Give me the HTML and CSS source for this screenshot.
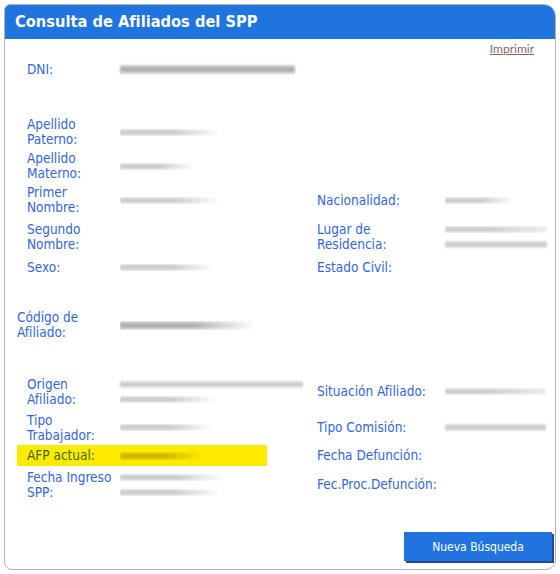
FILE: index.html
```html
<!DOCTYPE html>
<html lang="es">
<head>
    <meta charset="UTF-8">
    <title>Consulta de Afiliados del SPP</title>
    <link rel="stylesheet" href="styles.css">
</head>
<body>
    <div class="panel">
        <div class="panel-head">Consulta de Afiliados del SPP</div>

        <div class="panel-body">
            <div class="print-line"><a href="#">Imprimir</a></div>

            <div class="row r-dni">
                <span class="lbl">DNI:</span>
                <span class="val"><i class="blur dark" style="width:175px"></i></span>
            </div>

            <div class="row r-34 first">
                <span class="lbl">Apellido<br>Paterno:</span>
                <span class="val"><i class="blur fade" style="width:100px"></i></span>
            </div>
            <div class="row r-34">
                <span class="lbl">Apellido<br>Materno:</span>
                <span class="val"><i class="blur fade" style="width:74px"></i></span>
            </div>
            <div class="row r-34">
                <span class="lbl">Primer<br>Nombre:</span>
                <span class="val"><i class="blur fade" style="width:100px"></i></span>
                <span class="lbl side">Nacionalidad:</span>
                <span class="val"><i class="blur fade" style="width:68px"></i></span>
            </div>
            <div class="row r-40">
                <span class="lbl">Segundo<br>Nombre:</span>
                <span class="val"></span>
                <span class="lbl side">Lugar de<br>Residencia:</span>
                <span class="val stack">
                    <i class="blur fade-l" style="width:102px"></i>
                    <i class="blur" style="width:102px"></i>
                </span>
            </div>
            <div class="row r-20">
                <span class="lbl">Sexo:</span>
                <span class="val"><i class="blur fade" style="width:95px"></i></span>
                <span class="lbl side">Estado Civil:</span>
                <span class="val"></span>
            </div>

            <div class="row r-34 gap">
                <span class="lbl flush">Código de<br>Afiliado:</span>
                <span class="val"><i class="blur dark fade" style="width:135px"></i></span>
            </div>

            <div class="row r-37 gap">
                <span class="lbl">Origen<br>Afiliado:</span>
                <span class="val stack">
                    <i class="blur" style="width:183px"></i>
                    <i class="blur fade" style="width:96px"></i>
                </span>
                <span class="lbl side">Situación Afiliado:</span>
                <span class="val"><i class="blur fade-l" style="width:101px"></i></span>
            </div>
            <div class="row r-35">
                <span class="lbl">Tipo<br>Trabajador:</span>
                <span class="val"><i class="blur fade" style="width:93px"></i></span>
                <span class="lbl side">Tipo Comisión:</span>
                <span class="val"><i class="blur" style="width:101px"></i></span>
            </div>
            <div class="row r-21">
                <div class="mark">
                    <span class="lbl">AFP actual:</span>
                    <span class="val"><i class="blur olive fade" style="width:84px"></i></span>
                </div>
                <span class="lbl side">Fecha Defunción:</span>
                <span class="val"></span>
            </div>
            <div class="row r-37">
                <span class="lbl">Fecha Ingreso<br>SPP:</span>
                <span class="val stack">
                    <i class="blur fade" style="width:105px"></i>
                    <i class="blur fade" style="width:100px"></i>
                </span>
                <span class="lbl side">Fec.Proc.Defunción:</span>
                <span class="val"></span>
            </div>
        </div>

        <div class="actions">
            <button type="button">Nueva Búsqueda</button>
        </div>
    </div>
</body>
</html>
```

FILE: styles.css
```css
body {
    margin: 0;
    padding: 4px;
    background-color: #fff;
    font-family: "DejaVu Sans Condensed", "DejaVu Sans", sans-serif;
}

.panel {
    height: 564px;
    border: 1px solid #b3b3b3;
    border-radius: 6px 12px 10px 8px;
    overflow: hidden;
    display: flex;
    flex-direction: column;
}

.panel-head {
    background-color: #1f74e0;
    color: #fff;
    font-weight: bold;
    font-size: 16.3px;
    height: 34px;
    line-height: 33px;
    padding-left: 10px;
}

.panel-body {
    padding-left: 12px;
    font-size: 13.5px;
    line-height: 15px;
}

.print-line {
    height: 20px;
    text-align: right;
    padding-right: 21px;
    font-family: "Lato", sans-serif;
    font-size: 12px;
    line-height: 20px;
}

.print-line a {
    color: #7d6868;
}

.row {
    display: grid;
    grid-template-columns: 103px 185px 140px 102px;
    align-items: center;
}

.r-dni { height: 20px; }
.r-20 { height: 20px; }
.r-21 { height: 21px; }
.r-34 { height: 34px; }
.r-35 { height: 35px; }
.r-37 { height: 37px; }
.r-40 { height: 40px; }

.row.first { margin-top: 36px; }
.row.gap { margin-top: 31px; }

.lbl {
    color: #3366e0;
    padding-left: 10px;
    white-space: nowrap;
}

.lbl.side {
    padding-left: 12px;
}

.lbl.flush {
    padding-left: 0;
}

.val {
    display: flex;
    align-items: center;
}

.val.stack {
    flex-direction: column;
    align-items: flex-start;
    gap: 8px;
}

/* masked data, drawn as smudged bars */
.blur {
    display: block;
    height: 7px;
    background: linear-gradient(#e6e6e6, #c4c4c4 45%, #d2d2d2 70%, #ececec);
    filter: blur(0.8px);
}

.blur.dark {
    height: 9px;
    background: linear-gradient(#dadada, #a8a8a8 45%, #b8b8b8 70%, #e2e2e2);
}

.blur.olive {
    height: 8px;
    background: linear-gradient(#e8d400, #c2b000 50%, #e2d000);
}

.blur.fade {
    -webkit-mask-image: linear-gradient(to right, #000 55%, transparent);
    mask-image: linear-gradient(to right, #000 55%, transparent);
}

.blur.fade-l {
    -webkit-mask-image: linear-gradient(to right, #000 40%, rgba(0,0,0,0.4));
    mask-image: linear-gradient(to right, #000 40%, rgba(0,0,0,0.4));
}

.mark {
    grid-column: 1 / 3;
    width: 250px;
    height: 21px;
    background-color: #ffea00;
    display: grid;
    grid-template-columns: 103px 147px;
    align-items: center;
}

.mark .lbl {
    color: #3f6a1c;
}

.actions {
    margin-top: auto;
    display: flex;
    justify-content: flex-end;
    padding: 0 3px 8px 0;
}

button {
    width: 148px;
    height: 29px;
    border: none;
    background-color: #2174e0;
    color: #fff;
    font-family: "DejaVu Sans Condensed", "DejaVu Sans", sans-serif;
    font-size: 12px;
    box-shadow: 2px 2px 0 #1a4c94;
    cursor: pointer;
}
```
